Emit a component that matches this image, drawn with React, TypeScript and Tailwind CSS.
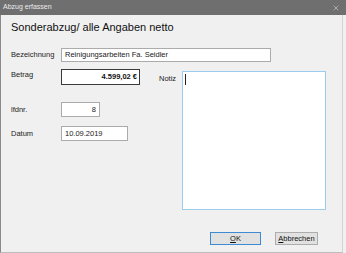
import { X } from "lucide-react";

const font = { fontFamily: '"Liberation Sans", Arial, sans-serif' };

function Field({
  value,
  className,
  align = "left",
}: {
  value: string;
  className: string;
  align?: "left" | "right";
}) {
  return (
    <div
      className={`flex items-center bg-white border border-[#ababab] px-[3px] text-[7.5px] text-[#1a1a1a] ${
        align === "right" ? "justify-end" : ""
      } ${className}`}
    >
      {value}
    </div>
  );
}

export default function App() {
  return (
    <div
      className="w-[346px] h-[253px] flex flex-col bg-[#f0f0f0] overflow-hidden"
      style={font}
    >
      {/* title bar */}
      <div className="h-[15px] shrink-0 flex items-center justify-between bg-[#6f6f6f] pl-[3px] pr-[6px]">
        <span className="text-[7px] text-[#ececec]">Abzug erfassen</span>
        <X className="w-[8px] h-[8px] text-[#e6e6e6]" strokeWidth={1.5} />
      </div>

      <div className="flex-1 flex flex-col w-[343px] border-l border-l-[#8a8a8a] border-r border-r-[#d2d2d2] border-b border-b-[#bdbdbd] pl-[10px]">
        <h1 className="mt-[4px] text-[11px] leading-[16px] text-[#111]">
          Sonderabzug/ alle Angaben netto
        </h1>

        <div className="mt-[13px] flex items-center">
          <span className="w-[50px] text-[7.5px] text-[#222]">Bezeichnung</span>
          <Field value="Reinigungsarbeiten Fa. Seidler" className="w-[210px] h-[14px]" />
        </div>

        <div className="flex">
          <div className="w-[148px] flex flex-col">
            <div className="mt-[7px] flex items-center">
              <span className="w-[50px] text-[7.5px] text-[#222] -mt-[5px]">Betrag</span>
              <div className="w-[79px] h-[16px] flex items-center justify-end bg-white border border-[#3a3a3a] px-[2px] text-[7.5px] font-bold text-[#111]">
                4.599,02 €
              </div>
            </div>
            <div className="mt-[17px] flex items-center">
              <span className="w-[50px] text-[7.5px] text-[#222]">lfdnr.</span>
              <Field value="8" align="right" className="w-[39px] h-[15px]" />
            </div>
            <div className="mt-[9px] flex items-center">
              <span className="w-[50px] text-[7.5px] text-[#222]">Datum</span>
              <Field value="10.09.2019" className="w-[67px] h-[15px]" />
            </div>
          </div>

          <div className="flex">
            <span className="mt-[11px] w-[23px] text-[7.5px] text-[#222]">Notiz</span>
            <div className="mt-[9px] w-[144px] h-[139px] bg-white border border-[#9dcdee] pl-[2px] pt-[2px]">
              <div className="w-px h-[11px] bg-[#222]" />
            </div>
          </div>
        </div>

        <div className="mt-auto mb-[7px] flex justify-end gap-[14px] pr-[24px]">
          <button className="w-[51px] h-[13px] flex items-center justify-center bg-[#e1e1e1] border border-[#3c8ad4] text-[7.5px] text-[#111]">
            <span>
              <u>O</u>K
            </span>
          </button>
          <button className="w-[43px] h-[13px] flex items-center justify-center bg-[#e1e1e1] border border-[#adadad] text-[7.5px] text-[#111]">
            <span>
              <u>A</u>bbrechen
            </span>
          </button>
        </div>
      </div>
    </div>
  );
}
